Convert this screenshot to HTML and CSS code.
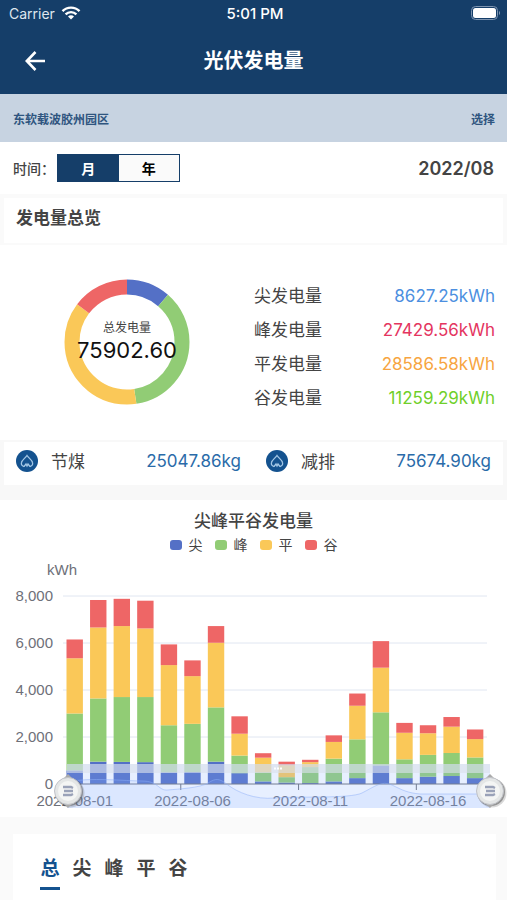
FILE: index.html
```html
<!DOCTYPE html>
<html lang="zh-CN">
<head>
    <meta charset="UTF-8">
    <meta name="viewport" content="width=device-width, initial-scale=1.0">
    <title>光伏发电量</title>
    <link rel="stylesheet" href="styles.css">
</head>
<body>
    <header class="header">
        <div class="status-bar">
            <div class="carrier">
                <span>Carrier</span>
                <svg width="20" height="14" viewBox="0 0 20 14" fill="none" stroke="#fff" stroke-width="2.4">
                    <path d="M1.5 5.2a12 12 0 0 1 17 0"/>
                    <path d="M4.6 8.4a7.6 7.6 0 0 1 10.8 0"/>
                    <path d="M10 13.6l-3-3a4.2 4.2 0 0 1 6 0z" fill="#fff" stroke="none"/>
                </svg>
            </div>
            <span class="clock">5:01 PM</span>
            <svg class="battery" width="30" height="14" viewBox="0 0 30 14">
                <rect x="0.5" y="0.5" width="26" height="13" rx="4" fill="none" stroke="#7d94b0"/>
                <rect x="2" y="2" width="23" height="10" rx="2.5" fill="#fff"/>
                <path d="M28 5v4a2.4 2.4 0 0 0 0-4z" fill="#7d94b0"/>
            </svg>
        </div>
        <div class="nav">
            <button class="back" aria-label="返回">
                <svg width="22" height="20" viewBox="0 0 22 20" fill="none" stroke="#fff" stroke-width="2.6">
                    <path d="M20 10H2.500M10.500 1L1.800 10l8.700 9"/>
                </svg>
            </button>
            <h1>光伏发电量</h1>
        </div>
    </header>

    <div class="station">
        <span>东软载波胶州园区</span>
        <button class="choose">选择</button>
    </div>

    <div class="time-row">
        <span class="time-label">时间：</span>
        <div class="switch">
            <button class="switch-item active">月</button>
            <button class="switch-item">年</button>
        </div>
        <span class="date">2022/08</span>
    </div>

    <h2 class="section-title">发电量总览</h2>

    <section class="overview">
        <div class="donut">
            <svg id="donut" viewBox="0 0 126 126"></svg>
            <div class="donut-text">
                <span class="donut-label">总发电量</span>
                <span class="donut-total">75902.60</span>
            </div>
        </div>
        <dl class="stats">
            <div><dt>尖发电量</dt><dd class="sharp">8627.25kWh</dd></div>
            <div><dt>峰发电量</dt><dd class="peak">27429.56kWh</dd></div>
            <div><dt>平发电量</dt><dd class="flat">28586.58kWh</dd></div>
            <div><dt>谷发电量</dt><dd class="valley">11259.29kWh</dd></div>
        </dl>
    </section>

    <section class="savings">
        <div class="saving">
            <svg width="22" height="22" viewBox="0 0 22 22">
                <circle cx="11" cy="11" r="11" fill="#14528f"/>
                <path d="M8 16.500c-2-.5-3-2-2.500-4 .5-2.500 3.500-4 5.500-7 2 3 5 4.500 5.500 7 .5 2-.5 3.500-2.500 4M8 16.500l2-2.500 1 2 1-2 2 2.500" fill="none" stroke="#a5c8e6" stroke-width="1.3"/>
            </svg>
            <span class="saving-name">节煤</span>
            <span class="saving-value">25047.86kg</span>
        </div>
        <div class="saving">
            <svg width="22" height="22" viewBox="0 0 22 22">
                <circle cx="11" cy="11" r="11" fill="#14528f"/>
                <path d="M8 16.500c-2-.5-3-2-2.500-4 .5-2.500 3.500-4 5.500-7 2 3 5 4.500 5.500 7 .5 2-.5 3.500-2.500 4M8 16.500l2-2.500 1 2 1-2 2 2.500" fill="none" stroke="#a5c8e6" stroke-width="1.3"/>
            </svg>
            <span class="saving-name">减排</span>
            <span class="saving-value">75674.90kg</span>
        </div>
    </section>

    <section class="chart-card">
        <h3>尖峰平谷发电量</h3>
        <ul class="legend">
            <li><i class="dot blue"></i>尖</li>
            <li><i class="dot green"></i>峰</li>
            <li><i class="dot yellow"></i>平</li>
            <li><i class="dot red"></i>谷</li>
        </ul>
        <svg class="chart" id="chart" viewBox="0 0 507 261"></svg>
    </section>

    <section class="detail">
        <nav class="tabs">
            <button class="tab active">总</button>
            <button class="tab">尖</button>
            <button class="tab">峰</button>
            <button class="tab">平</button>
            <button class="tab">谷</button>
        </nav>
    </section>

    <script src="script.js"></script>
</body>
</html>
```

FILE: styles.css
```css
* {
    margin: 0;
    padding: 0;
    box-sizing: border-box;
}

body {
    min-height: 100vh;
    display: flex;
    flex-direction: column;
    font-family: Inter, "Noto Sans CJK SC", sans-serif;
    font-size: 17px;
    color: #444;
    background: #fff;
}

button {
    font: inherit;
    color: inherit;
    background: none;
    border: none;
    cursor: pointer;
}

svg {
    display: block;
}

.header {
    background: #153e69;
    color: #fff;
}

.status-bar {
    display: grid;
    grid-template-columns: 1fr auto 1fr;
    align-items: center;
    height: 28px;
    padding: 0 6px 2px 9px;
    font-size: 14px;
}

.carrier {
    display: flex;
    align-items: center;
    gap: 6px;
    color: #dfe6ee;
}

.clock {
    font-size: 15px;
    font-weight: 500;
}

.battery {
    justify-self: end;
}

.nav {
    display: grid;
    grid-template-columns: 48px 1fr 48px;
    align-items: center;
    height: 66px;
}

.back {
    padding-left: 25px;
}

.nav h1 {
    font-size: 20px;
    line-height: 28px;
    text-align: center;
}

.station {
    display: flex;
    justify-content: space-between;
    align-items: center;
    height: 48px;
    padding: 0 12px 0 13px;
    font-size: 12px;
    font-weight: 700;
    color: #2f557f;
    background: #c7d3e1;
}

.time-row {
    display: flex;
    align-items: center;
    height: 52px;
    padding: 0 13px;
}

.time-label {
    width: 44px;
    font-size: 14px;
    font-weight: 500;
    white-space: nowrap;
}

.switch {
    display: flex;
    width: 123px;
    height: 28px;
    border: 1px solid #153e69;
}

.switch-item {
    flex: 1;
    font-size: 14px;
    font-weight: 700;
    color: #000;
    background: #fafafa;
}

.switch-item.active {
    color: #fff;
    background: #153e69;
}

.date {
    margin-left: auto;
    font-size: 18px;
    font-weight: 600;
}

.section-title {
    height: 51px;
    padding: 0 12px;
    border: 4px solid #fafafa;
    border-bottom-width: 2px;
    font-size: 17px;
    font-weight: 700;
    line-height: 40px;
}

.overview {
    display: flex;
    align-items: center;
    height: 195px;
    padding: 0 12px 2px 0;
}

.donut {
    flex: 1;
    display: grid;
    place-items: center;
}

.donut svg,
.donut-text {
    grid-area: 1 / 1;
}

.donut svg {
    width: 126px;
}

.donut-text {
    display: flex;
    flex-direction: column;
    align-items: center;
    padding-bottom: 2px;
    z-index: 1;
}

.donut-label {
    font-size: 12px;
    line-height: 18px;
}

.donut-total {
    font-size: 22px;
    line-height: 26px;
    color: #111;
}

.stats {
    width: 241px;
    padding-top: 10px;
}

.stats div {
    display: flex;
    justify-content: space-between;
    line-height: 34px;
}

.sharp {
    color: #4c8fe0;
}

.peak {
    color: #e4355f;
}

.flat {
    color: #f7a541;
}

.valley {
    color: #6fcf2a;
}

.savings {
    display: flex;
    gap: 25px;
    height: 60px;
    padding: 0 12px;
    border: solid #f8f8f8;
    border-width: 2px 4px 15px;
}

.saving {
    flex: 1;
    display: flex;
    align-items: center;
    height: 37px;
}

.saving-name {
    margin-left: 13px;
}

.saving-value {
    margin-left: auto;
    color: #2a6ba9;
}

.chart-card {
    padding-top: 8px;
}

.chart-card h3 {
    font-size: 17px;
    font-weight: 500;
    line-height: 26px;
    text-align: center;
}

.legend {
    display: flex;
    justify-content: center;
    gap: 12px;
    list-style: none;
    font-size: 14px;
    line-height: 22px;
}

.legend li {
    display: flex;
    align-items: center;
    gap: 7px;
}

.dot {
    width: 12px;
    height: 10px;
    border-radius: 3px;
}

.blue {
    background: #5470c6;
}

.green {
    background: #91cc75;
}

.yellow {
    background: #fac858;
}

.red {
    background: #ee6666;
}

.chart {
    width: 100%;
}

.chart text {
    font-family: "Liberation Sans", "Noto Sans CJK SC", sans-serif;
    font-size: 15px;
    fill: #6e7079;
}

.detail {
    flex: 1;
    border: solid #fafafa;
    border-width: 17px 11px 0 13px;
}

.tabs {
    display: flex;
    gap: 12px;
    padding: 20px 27px 0;
}

.tab {
    width: 20px;
    font-size: 19px;
    font-weight: 700;
    line-height: 30px;
    padding-bottom: 3px;
    border-bottom: 3px solid transparent;
}

.tab.active {
    color: #14528f;
    border-color: #14528f;
}
```

FILE: script.js
```js
const colors = ['#5470c6', '#91cc75', '#fac858', '#ee6666'];

// one row per day, running totals: 尖, 峰, 平, 谷
const days = [
    [580, 3000, 5350, 6150],
    [950, 3640, 6660, 7830],
    [940, 3700, 6720, 7880],
    [930, 3700, 6620, 7800],
    [500, 2500, 5060, 5940],
    [510, 2560, 4590, 5260],
    [950, 3260, 6010, 6720],
    [460, 1210, 2140, 2880],
    [110, 500, 1120, 1310],
    [60, 290, 800, 950],
    [40, 720, 930, 1030],
    [110, 1080, 1790, 2070],
    [250, 1900, 3330, 3850],
    [790, 3050, 4950, 6080],
    [250, 1050, 2180, 2600],
    [310, 1240, 2160, 2500],
    [340, 1320, 2440, 2850],
    [250, 1130, 1910, 2320],
];

const drawDonut = () => {
    const values = [8627.25, 27429.56, 28586.58, 11259.29];
    const total = values.reduce((a, b) => a + b, 0);
    const r = 55;
    const length = 2 * Math.PI * r;
    let offset = 0;
    let out = '';
    values.forEach((value, i) => {
        const part = value / total * length;
        out += `<circle cx="63" cy="63" r="${r}" fill="none" stroke="${colors[i]}" stroke-width="15"
            stroke-dasharray="${part} ${length - part}" stroke-dashoffset="${-offset}" transform="rotate(-90 63 63)"/>`;
        offset += part;
    });
    document.getElementById('donut').innerHTML = out;
};

const handle = (x) => `
    <g transform="translate(${x} 235)">
        <circle cx="2" cy="2" r="14.5" fill="#000" opacity="0.15"/>
        <circle cx="1" cy="1" r="14" fill="#666" opacity="0.6"/>
        <path d="M0-17l4 4h-8zM0 17l4-4h-8z" fill="#aaa"/>
        <circle r="13.5" fill="#e4e6e6" stroke="#c0c2c8"/>
        <circle r="10" fill="#f4f5f4"/>
        <path d="M-5-4H3l2 1M-4 0H5M-5 4H3l2-1" fill="none" stroke="#9aa2b8" stroke-width="2.4"/>
    </g>`;

const drawChart = () => {
    const left = 63;
    const right = 487;
    const bottom = 228;
    const step = (right - left) / days.length;
    const y = (value) => bottom - value * 188 / 8000;
    let out = '<text x="62" y="19" text-anchor="middle">kWh</text>';

    for (let value = 0; value <= 8000; value += 2000) {
        if (value) {
            out += `<path d="M${left} ${y(value)}H${right}" stroke="#e0e6f1"/>`;
        }
        out += `<text x="53" y="${y(value) + 5}" text-anchor="end">${value.toLocaleString('en-US')}</text>`;
    }

    days.forEach((day, i) => {
        let base = 0;
        day.forEach((value, k) => {
            out += `<rect x="${left + i * step + 3.5}" y="${y(value)}" width="16.4" height="${y(base) - y(value)}" fill="${colors[k]}"/>`;
            base = value;
        });
    });

    out += `<path d="M${left} ${bottom}H${right}" stroke="#6e7079"/>`;
    [0, 5, 10, 15].forEach((i) => {
        const x = left + i * step;
        const name = '2022-08-' + String(i + 1).padStart(2, '0');
        out += `<path d="M${x} ${bottom}v6" stroke="#6e7079"/>`;
        out += `<text x="${x + step / 2}" y="250" text-anchor="middle">${name}</text>`;
    });

    // zoom slider under the axis
    const wave = 'M67 226C90 221 125 225 142 225S158 235 168 234S200 232 208 227S219 222 228 229S255 244 275 242S350 243 362 237S382 224 392 229S408 237 420 238H490';
    out += `<path d="${wave}V252H67z" fill="#87afff" opacity="0.12"/>`;
    out += `<path d="${wave}" fill="none" stroke="#8fb0f7" opacity="0.5"/>`;
    out += '<rect x="67" y="217" width="423" height="35" fill="#87afff" opacity="0.2"/>';
    out += '<rect x="67" y="208" width="423" height="9" fill="#d2dbee" opacity="0.7"/>';
    out += '<path d="M274 212.500h8" stroke="#fff" stroke-width="2" stroke-dasharray="2 1"/>';
    out += handle(68) + handle(490);

    document.getElementById('chart').innerHTML = out;
};

drawDonut();
drawChart();
```
